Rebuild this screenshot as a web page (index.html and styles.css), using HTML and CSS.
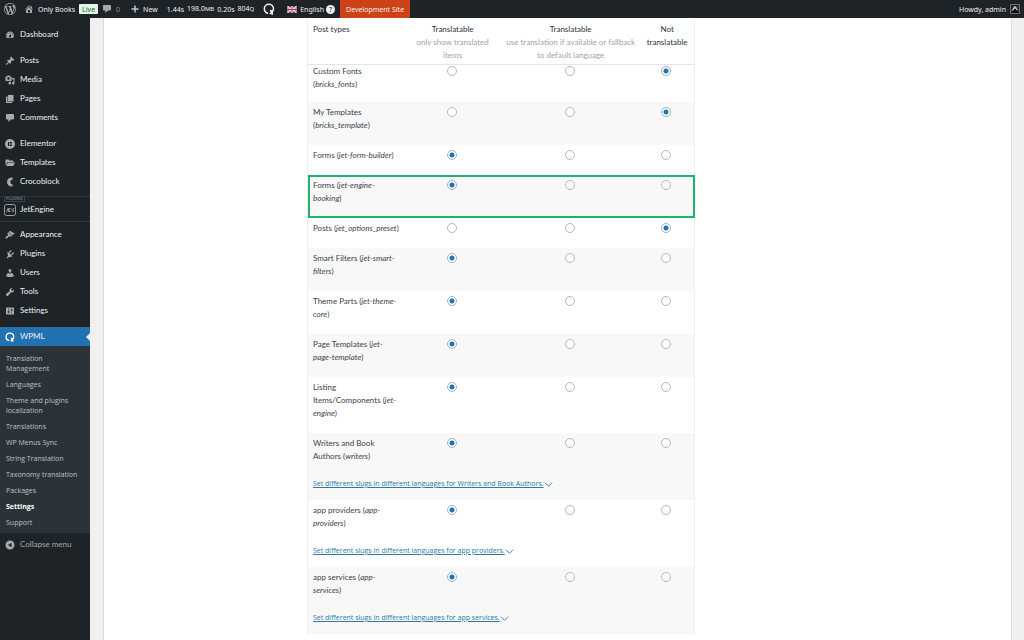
FILE: index.html
```html
<!DOCTYPE html>
<html lang="en">
<head>
<meta charset="utf-8">
<meta name="viewport" content="width=device-width, initial-scale=1">
<title>Settings ‹ Only Books</title>
<link rel="stylesheet" href="styles.css">
</head>
<body>
<svg class="sprite" aria-hidden="true">
<symbol id="wp" viewBox="0 0 20 20"><path d="M20 10c0-5.51-4.49-10-10-10C4.48 0 0 4.49 0 10c0 5.52 4.48 10 10 10 5.51 0 10-4.48 10-10zM7.78 15.37L4.37 6.22c.55-.02 1.17-.08 1.17-.08.5-.06.44-1.13-.06-1.11 0 0-1.45.11-2.37.11-.18 0-.37 0-.58-.01C4.12 2.69 6.87 1.11 10 1.11c2.33 0 4.45.87 6.05 2.34-.68-.11-1.65.39-1.65 1.58 0 .74.45 1.36.9 2.1.35.61.55 1.36.55 2.46 0 1.49-1.4 5-1.4 5l-3.03-8.37c.54-.02.82-.17.82-.17.5-.05.44-1.25-.06-1.22 0 0-1.44.12-2.38.12-.87 0-2.33-.12-2.33-.12-.5-.03-.56 1.2-.06 1.22l.92.08 1.26 3.41zM17.41 10c.24-.64.74-1.87.43-4.25.7 1.29 1.05 2.71 1.05 4.25 0 3.29-1.73 6.24-4.4 7.78.97-2.59 1.94-5.2 2.92-7.78zM6.1 18.09C3.12 16.65 1.11 13.53 1.11 10c0-1.3.23-2.48.72-3.59C3.25 10.3 4.67 14.2 6.1 18.09zm4.03-6.63l2.58 6.98c-.86.29-1.76.45-2.71.45-.79 0-1.57-.11-2.29-.33.81-2.38 1.62-4.74 2.42-7.1z"/></symbol>
<symbol id="home" viewBox="0 0 20 20"><path fill-rule="evenodd" d="M16 8.500l1.530 1.530-1.060 1.060L10 4.600l-6.470 6.490-1.060-1.060L10 2.500l4 4v-2h2v4zm-6-2.460l6 5.990V18H4v-5.970zM12 17v-5H8v5h4z"/></symbol>
<symbol id="comment" viewBox="0 0 20 20"><path d="M4 2h12c1.100 0 2 .9 2 2v7c0 1.100-.9 2-2 2h-4l-5 5v-5H4c-1.100 0-2-.9-2-2V4c0-1.100.9-2 2-2z"/></symbol>
<symbol id="plus" viewBox="0 0 20 20"><path d="M17 8.500v3h-5.500V17h-3v-5.500H3v-3h5.500V3h3v5.500z"/></symbol>
<symbol id="wpml" viewBox="0 0 20 20"><path fill="none" stroke="currentColor" stroke-width="2.600" d="M8.500 17.200A7.600 7.600 0 1 1 17.400 10c0 3.200-2.400 4.800-4.800 3.500"/><path d="M11 11l6 1.500-.6 7.300-6.400-2.300 3-1.500z"/></symbol>
<symbol id="dash" viewBox="0 0 20 20"><path fill-rule="evenodd" d="M3.760 16h12.480c1.100-1.370 1.760-3.110 1.760-5 0-4.420-3.580-8-8-8s-8 3.580-8 8c0 1.890.66 3.630 1.760 5zM10 4c.55 0 1 .45 1 1s-.45 1-1 1-1-.45-1-1 .45-1 1-1zM6 6c.55 0 1 .45 1 1s-.45 1-1 1-1-.45-1-1 .45-1 1-1zm8 0c.55 0 1 .45 1 1s-.45 1-1 1-1-.45-1-1 .45-1 1-1zm-5.370 5.550L12 7v6c0 1.100-.9 2-2 2s-2-.9-2-2c0-.57.24-1.080.63-1.450zM4 10c.55 0 1 .45 1 1s-.45 1-1 1-1-.45-1-1 .45-1 1-1zm12 0c.55 0 1 .45 1 1s-.45 1-1 1-1-.45-1-1 .45-1 1-1z"/></symbol>
<symbol id="pin" viewBox="0 0 20 20"><path d="M10.440 3.020l1.820-1.820 6.360 6.350-1.830 1.820c-1.050-.68-2.480-.57-3.410.36l-.75.75c-.92.93-1.040 2.350-.35 3.410l-1.830 1.820-2.410-2.410-2.800 2.790c-.42.42-3.380 2.710-3.800 2.290s1.860-3.390 2.280-3.810l2.790-2.790L4.100 9.360l1.830-1.820c1.050.69 2.480.57 3.400-.36l.75-.75c.93-.92 1.050-2.350.36-3.410z"/></symbol>
<symbol id="media" viewBox="0 0 20 20"><path fill-rule="evenodd" d="M13 11V4c0-.55-.45-1-1-1h-1.670L9 1H5L3.670 3H2c-.55 0-1 .45-1 1v7c0 .55.45 1 1 1h10c.55 0 1-.45 1-1zM7 4.500c1.380 0 2.500 1.120 2.500 2.500S8.380 9.500 7 9.500 4.500 8.380 4.500 7 5.620 4.500 7 4.500zM14 6h5v10.500c0 1.380-1.120 2.500-2.500 2.500S14 17.880 14 16.500s1.120-2.500 2.500-2.500c.17 0 .34.02.5.05V9h-3V6zm-4 8.050V13h2v3.500c0 1.380-1.120 2.500-2.500 2.500S7 17.880 7 16.500 8.120 14 9.500 14c.17 0 .34.02.5.05z"/></symbol>
<symbol id="page" viewBox="0 0 20 20"><path d="M6 15V2h11v13H6zm-1 1h9v2H2V5h3v11z"/></symbol>
<symbol id="elementor" viewBox="0 0 20 20"><path fill-rule="evenodd" d="M10 0a10 10 0 1 0 0 20 10 10 0 0 0 0-20zM6 6h2v8H6zm3 0h5v2H9zm0 3h5v2H9zm0 3h5v2H9z"/></symbol>
<symbol id="folder" viewBox="0 0 20 20"><path d="M1 15.500V4.500C1 3.700 1.700 3 2.500 3H7l2 2h6.500c.8 0 1.500.7 1.500 1.500V8H5z"/><path d="M5.800 9H20l-3.500 7H2.300z"/></symbol>
<symbol id="croco" viewBox="0 0 20 20"><path d="M15 1v4.500A4.500 4.500 0 0 0 15 14.500V19C8 19.300 4 15 4 10s4-9.300 11-9z"/></symbol>
<symbol id="jet" viewBox="0 0 24 24"><rect x="1" y="1" width="22" height="22" rx="4" fill="none" stroke="currentColor" stroke-width="1.800"/><path fill="none" stroke="currentColor" stroke-width="1.800" d="M4 15c2 1 3-1 3-6M13 9H9v6h4M9 12h3M20 9c-5-1-6 6-1 6v-3"/></symbol>
<symbol id="brush" viewBox="0 0 20 20"><path d="M14.480 11.060L7.410 3.990l1.500-1.500c.5-.56 2.300-.47 3.510.32 1.210.8 1.430 1.280 2.910 2.100 1.180.64 2.450 1.260 4.450.85zm-.71.71L6.700 4.700 4.930 6.470c-.39.39-.39 1.020 0 1.410l1.060 1.060c.39.39.39 1.030 0 1.420-.6.6-1.430 1.110-2.210 1.690-.35.26-.7.53-1.010.84C1.430 14.230.4 16.080 1.400 17.070c.99 1 2.840-.03 4.180-1.360.31-.31.58-.66.85-1.020.57-.78 1.080-1.610 1.690-2.210.39-.39 1.020-.39 1.410 0l1.060 1.060c.39.39 1.020.39 1.410 0z"/></symbol>
<symbol id="plug" viewBox="0 0 20 20"><path d="M13.100 4.400L9.900 7.600 8 5.700l3.200-3.200c.4-.3 1.100-.2 1.600.3s.7 1.200.3 1.600zM17.500 8.800l-3.200 3.200-1.900-1.900 3.200-3.200c.4-.3 1.100-.2 1.600.3s.7 1.200.3 1.600zM5.700 5l9.300 9.300c-1.600 1.700-4.300 2.100-6.300 1.100l-2.600 2.500c-.6.6-1.600.6-2.100 0-.6-.6-.6-1.500 0-2.100l2.400-2.500c-1.300-2.100-2.300-6.300-.7-8.300z"/></symbol>
<symbol id="user" viewBox="0 0 20 20"><path d="M10 9.250c-2.270 0-2.730-3.440-2.730-3.440C7 4.020 7.820 2 9.970 2c2.160 0 2.980 2.020 2.710 3.810 0 0-.41 3.440-2.680 3.440zm0 2.570L12.720 10c2.390 0 4.520 2.330 4.520 4.530v2.490s-3.650 1.130-7.240 1.130c-3.650 0-7.240-1.130-7.240-1.130v-2.490c0-2.250 1.940-4.480 4.470-4.480z"/></symbol>
<symbol id="tool" viewBox="0 0 20 20"><path d="M16.680 9.770c-1.340 1.340-3.300 1.670-4.950.99l-5.410 6.520c-.99.99-2.590.99-3.580 0s-.99-2.590 0-3.570l6.520-5.420c-.68-1.650-.35-3.610.99-4.950 1.280-1.280 3.120-1.620 4.720-1.060l-2.890 2.890 2.820 2.820 2.860-2.870c.53 1.580.18 3.390-1.080 4.650z"/></symbol>
<symbol id="sliders" viewBox="0 0 20 20"><path fill-rule="evenodd" d="M18 16V4c0-.55-.45-1-1-1H3c-.55 0-1 .45-1 1v12c0 .55.45 1 1 1h14c.55 0 1-.45 1-1zM8 11h1c.55 0 1 .45 1 1s-.45 1-1 1H8v1.500c0 .28-.22.5-.5.5s-.5-.22-.5-.5V13H6c-.55 0-1-.45-1-1s.45-1 1-1h1V5.500c0-.28.22-.5.5-.5s.5.22.5.5V11zm5-2h-1c-.55 0-1-.45-1-1s.45-1 1-1h1V5.500c0-.28.22-.5.5-.5s.5.22.5.5V7h1c.55 0 1 .45 1 1s-.45 1-1 1h-1v5.500c0 .28-.22.5-.5.5s-.5-.22-.5-.5V9z"/></symbol>
<symbol id="collapse" viewBox="0 0 20 20"><path fill-rule="evenodd" d="M10 1a9 9 0 1 0 0 18 9 9 0 0 0 0-18zm3 4.500v9L6 10z"/></symbol>
<symbol id="chev" viewBox="0 0 10 10"><path fill="none" stroke="currentColor" stroke-width="1" d="M1 3l4 4 4-4"/></symbol>
</svg>

<header class="bar">
  <a href="#" class="bar-wp" aria-label="About WordPress"><svg class="ic ic-lg"><use href="#wp"/></svg></a>
  <a href="#" class="bar-site"><svg class="ic"><use href="#home"/></svg>Only Books</a>
  <a href="#" class="live">Live</a>
  <a href="#" class="bar-comments"><svg class="ic"><use href="#comment"/></svg><span class="zero">0</span></a>
  <a href="#" class="bar-new"><svg class="ic"><use href="#plus"/></svg>New</a>
  <a href="#" class="bar-stats"><span>1.44s</span><span>198.0<small>MB</small></span><span>0.20s</span><span>804<small>Q</small></span></a>
  <a href="#" class="bar-wpml" aria-label="WPML"><svg class="ic ic-lg"><use href="#wpml"/></svg></a>
  <a href="#" class="bar-lang"><svg class="flag" viewBox="0 0 20 14"><path fill="#2b3f86" d="M0 0h20v14H0z"/><path stroke="#fff" stroke-width="3" d="M0 0l20 14M20 0L0 14"/><path stroke="#d8283f" stroke-width="1" d="M0 0l20 14M20 0L0 14"/><path stroke="#fff" stroke-width="4" d="M10 0v14M0 7h20"/><path stroke="#d8283f" stroke-width="2" d="M10 0v14M0 7h20"/></svg>English<span class="help">?</span></a>
  <a href="#" class="dev">Development Site</a>
  <a href="#" class="howdy">Howdy, admin<svg class="avatar" viewBox="0 0 20 20"><path fill="#23252a" stroke="#85878a" stroke-width="1.500" d="M1 1h18v18H1z"/><path fill="#c9c5bd" d="M3 14l5-9 3-1 2 4 4 5-4-1-3-3-2 3z"/><path fill="#050505" d="M6 14l4-5 4 6 3 1v2H4z"/><path fill="#b4653a" d="M13 4l3 3-1 1-2-2z"/></svg></a>
</header>

<div class="shell">
<nav class="side" aria-label="Main menu">
  <ul class="menu">
    <li><a href="#"><svg class="ic"><use href="#dash"/></svg>Dashboard</a></li>
    <li class="gap"><a href="#"><svg class="ic"><use href="#pin"/></svg>Posts</a></li>
    <li><a href="#"><svg class="ic"><use href="#media"/></svg>Media</a></li>
    <li><a href="#"><svg class="ic"><use href="#page"/></svg>Pages</a></li>
    <li><a href="#"><svg class="ic"><use href="#comment"/></svg>Comments</a></li>
    <li class="gap"><a href="#"><svg class="ic"><use href="#elementor"/></svg>Elementor</a></li>
    <li><a href="#"><svg class="ic"><use href="#folder"/></svg>Templates</a></li>
    <li><a href="#"><svg class="ic"><use href="#croco"/></svg>Crocoblock</a></li>
    <li class="jet"><span class="tag">PLUGINS</span><a href="#"><svg class="ic ic-lg"><use href="#jet"/></svg>JetEngine</a></li>
    <li class="near"><a href="#"><svg class="ic"><use href="#brush"/></svg>Appearance</a></li>
    <li><a href="#"><svg class="ic"><use href="#plug"/></svg>Plugins</a></li>
    <li><a href="#"><svg class="ic"><use href="#user"/></svg>Users</a></li>
    <li><a href="#"><svg class="ic"><use href="#tool"/></svg>Tools</a></li>
    <li><a href="#"><svg class="ic"><use href="#sliders"/></svg>Settings</a></li>
    <li class="gap current"><a href="#"><svg class="ic"><use href="#wpml"/></svg>WPML</a>
      <ul class="sub">
        <li><a href="#">Translation<br>Management</a></li>
        <li><a href="#">Languages</a></li>
        <li><a href="#">Theme and plugins<br>localization</a></li>
        <li><a href="#">Translations</a></li>
        <li><a href="#">WP Menus Sync</a></li>
        <li><a href="#">String Translation</a></li>
        <li><a href="#">Taxonomy translation</a></li>
        <li><a href="#">Packages</a></li>
        <li><a href="#" class="on">Settings</a></li>
        <li><a href="#">Support</a></li>
      </ul>
    </li>
  </ul>
  <button type="button" class="collapse"><svg class="ic"><use href="#collapse"/></svg>Collapse menu</button>
</nav>

<main class="panel">
<table class="types">
  <colgroup><col class="c-name"><col class="c-show"><col class="c-fall"><col class="c-not"></colgroup>
  <thead>
    <tr><th scope="col">Post types</th><th scope="col">Translatable<br><span>only show translated<br>items</span></th><th scope="col">Translatable<br><span>use translation if available or fallback<br>to default language</span></th><th scope="col">Not<br>translatable</th></tr>
  </thead>
  <tbody>
    <tr class="first"><td>Custom Fonts<br>(<i>bricks_fonts</i>)</td><td><input type="radio" name="t1" aria-label="Custom Fonts: translatable"></td><td><input type="radio" name="t1" aria-label="Custom Fonts: fallback"></td><td><input type="radio" name="t1" aria-label="Custom Fonts: not translatable" checked></td></tr>
    <tr class="alt"><td>My Templates<br>(<i>bricks_template</i>)</td><td><input type="radio" name="t2" aria-label="My Templates: translatable"></td><td><input type="radio" name="t2" aria-label="My Templates: fallback"></td><td><input type="radio" name="t2" aria-label="My Templates: not translatable" checked></td></tr>
    <tr><td>Forms (<i>jet-form-builder</i>)</td><td><input type="radio" name="t3" aria-label="Form builder: translatable" checked></td><td><input type="radio" name="t3" aria-label="Form builder: fallback"></td><td><input type="radio" name="t3" aria-label="Form builder: not translatable"></td></tr>
    <tr class="alt marked"><td>Forms (<i>jet-engine-<br>booking</i>)</td><td><input type="radio" name="t4" aria-label="Booking forms: translatable" checked></td><td><input type="radio" name="t4" aria-label="Booking forms: fallback"></td><td><input type="radio" name="t4" aria-label="Booking forms: not translatable"></td></tr>
    <tr><td>Posts (<i>jet_options_preset</i>)</td><td><input type="radio" name="t5" aria-label="Posts: translatable"></td><td><input type="radio" name="t5" aria-label="Posts: fallback"></td><td><input type="radio" name="t5" aria-label="Posts: not translatable" checked></td></tr>
    <tr class="alt"><td>Smart Filters (<i>jet-smart-<br>filters</i>)</td><td><input type="radio" name="t6" aria-label="Smart Filters: translatable" checked></td><td><input type="radio" name="t6" aria-label="Smart Filters: fallback"></td><td><input type="radio" name="t6" aria-label="Smart Filters: not translatable"></td></tr>
    <tr><td>Theme Parts (<i>jet-theme-<br>core</i>)</td><td><input type="radio" name="t7" aria-label="Theme Parts: translatable" checked></td><td><input type="radio" name="t7" aria-label="Theme Parts: fallback"></td><td><input type="radio" name="t7" aria-label="Theme Parts: not translatable"></td></tr>
    <tr class="alt"><td>Page Templates (<i>jet-<br>page-template</i>)</td><td><input type="radio" name="t8" aria-label="Page Templates: translatable" checked></td><td><input type="radio" name="t8" aria-label="Page Templates: fallback"></td><td><input type="radio" name="t8" aria-label="Page Templates: not translatable"></td></tr>
    <tr><td>Listing<br>Items/Components (<i>jet-<br>engine</i>)</td><td><input type="radio" name="t9" aria-label="Listing Items: translatable" checked></td><td><input type="radio" name="t9" aria-label="Listing Items: fallback"></td><td><input type="radio" name="t9" aria-label="Listing Items: not translatable"></td></tr>
    <tr class="alt"><td>Writers and Book<br>Authors (<i>writers</i>)</td><td><input type="radio" name="t10" aria-label="Writers: translatable" checked></td><td><input type="radio" name="t10" aria-label="Writers: fallback"></td><td><input type="radio" name="t10" aria-label="Writers: not translatable"></td></tr>
    <tr class="alt slug"><td colspan="4"><a href="#">Set different slugs in different languages for Writers and Book Authors.</a><svg class="chev"><use href="#chev"/></svg></td></tr>
    <tr><td>app providers (<i>app-<br>providers</i>)</td><td><input type="radio" name="t11" aria-label="app providers: translatable" checked></td><td><input type="radio" name="t11" aria-label="app providers: fallback"></td><td><input type="radio" name="t11" aria-label="app providers: not translatable"></td></tr>
    <tr class="slug"><td colspan="4"><a href="#">Set different slugs in different languages for app providers.</a><svg class="chev"><use href="#chev"/></svg></td></tr>
    <tr class="alt"><td>app services (<i>app-<br>services</i>)</td><td><input type="radio" name="t12" aria-label="app services: translatable" checked></td><td><input type="radio" name="t12" aria-label="app services: fallback"></td><td><input type="radio" name="t12" aria-label="app services: not translatable"></td></tr>
    <tr class="alt slug"><td colspan="4"><a href="#">Set different slugs in different languages for app services.</a><svg class="chev"><use href="#chev"/></svg></td></tr>
  </tbody>
</table>
</main>
</div>
</body>
</html>
```
FILE: styles.css
```css
* { box-sizing: border-box; }
body {
  margin: 0;
  min-height: 100vh;
  display: flex;
  flex-direction: column;
  background: #f0f0f1;
  color: #3c434a;
  font: 8px/13px Lato, "Open Sans", sans-serif;
}
a { color: inherit; text-decoration: none; }
ul { margin: 0; padding: 0; list-style: none; }
.sprite { display: none; }
.ic { width: 10px; height: 10px; flex: none; fill: currentColor; color: #a7aaad; }
.ic-lg { width: 12px; height: 12px; }

.bar {
  display: flex;
  align-items: center;
  height: 18px;
  padding: 0 4px;
  background: #1d2327;
  color: #f0f0f1;
  font-family: "Noto Sans", sans-serif;
  font-size: 7px;
  white-space: nowrap;
}
.bar a { display: flex; align-items: center; flex: none; }
.bar-site { gap: 4px; margin-left: 8px; }
.bar .live {
  height: 10px;
  margin-left: 4px;
  padding: 0 3px;
  border-radius: 1px;
  background: #e2f5e6;
  color: #12682b;
}
.bar-comments { gap: 4px; margin-left: 4px; }
.zero { color: #8c9196; }
.bar-new { gap: 3px; margin-left: 10px; }
.bar-new .ic { color: #c3c4c7; }
.bar-stats { gap: 3px; margin-left: 9px; }
.bar-stats small { font-size: 6px; }
.bar-wpml { margin-left: 9px; }
.bar-wpml .ic { color: #f0f0f1; }
.bar-lang { gap: 3px; margin-left: 12px; }
.flag { width: 10px; height: 7px; }
.help {
  width: 9px;
  height: 9px;
  margin-left: -1px;
  border-radius: 50%;
  background: #f0f0f1;
  color: #1d2327;
  line-height: 9px;
  text-align: center;
}
.bar .dev { align-self: stretch; margin-left: 5px; padding: 0 6px; background: #ce4218; }
.bar .howdy { gap: 4px; margin-left: auto; }
.avatar { width: 10px; height: 10px; }

.shell { display: flex; flex: 1; }
.side {
  flex: none;
  width: 90px;
  padding-top: 7px;
  background: #1d2327;
  color: #f0f0f1;
}
.menu > li > a { display: flex; align-items: center; gap: 5px; height: 19px; padding-left: 5px; }
.menu > li > a .ic-lg { margin: 0 -1px; }
.menu .gap { margin-top: 7px; }
.menu .near { margin-top: 3px; }
.menu .jet {
  position: relative;
  margin-top: 5px;
  padding: 3px 0 2px;
  border: solid #30363c;
  border-width: 1px 0;
}
.tag {
  position: absolute;
  top: -1px;
  left: 4px;
  padding: 0 1px;
  border: 1px solid #3c434a;
  color: #8c9196;
  font-size: 4px;
  line-height: 4px;
}
.current > a { position: relative; background: #2271b1; }
.current > a .ic { color: #fff; }
.current > a::after {
  content: "";
  position: absolute;
  right: 0;
  border: 4px solid transparent;
  border-right-color: #f0f0f1;
  border-left: 0;
}
.sub {
  padding: 5px 0 2px;
  background: #2c3338;
  color: #bcc0c3;
  font-family: "Open Sans", sans-serif;
  font-size: 7px;
}
.sub a { display: block; padding: 3px 6px; line-height: 10px; }
.sub .on { color: #fff; font-weight: 700; }
.collapse {
  display: flex;
  align-items: center;
  gap: 5px;
  height: 23px;
  padding: 0 5px;
  border: 0;
  background: none;
  color: #a7aaad;
  font: inherit;
}

.panel {
  flex: 1;
  margin: 0 12px 0 13px;
  padding-left: 203px;
  border: solid #dcdcde;
  border-width: 0 1px;
  background: #fff;
}
.types {
  width: 388px;
  border-collapse: collapse;
  table-layout: fixed;
  border: solid #f0f0f1;
  border-width: 0 1px;
}
.c-name { width: 25%; }
.c-show { width: 25%; }
.c-fall { width: 36%; }
.c-not { width: 14%; }
.types th {
  padding: 5px 0 2px;
  border-bottom: 1px solid #e5e5e7;
  color: #2c3338;
  font-weight: 400;
  vertical-align: top;
  text-align: center;
  white-space: nowrap;
}
.types th span { color: #a0a3a6; }
.types td { padding: 4px 2px 13px 0; vertical-align: top; text-align: center; white-space: nowrap; }
.types th:first-child, .types td:first-child { padding-left: 5px; text-align: left; }
.types .first td { padding-top: 0; padding-bottom: 11px; }
.alt { background: #f8f8f8; }
.marked { outline: 2px solid #1cb56b; outline-offset: -2px; }
.types .slug td {
  padding: 1px 0 10px 5px;
  color: #2b7ba3;
  font-family: "Open Sans", sans-serif;
  font-size: 7px;
}
.slug a { text-decoration: underline; }
.chev { width: 9px; height: 9px; vertical-align: middle; }
.types input {
  appearance: none;
  display: block;
  width: 10px;
  height: 10px;
  margin: 1px auto 0;
  border: 1px solid #b4b7ba;
  border-radius: 50%;
  background: #fff;
}
.types input:checked { border-color: #93b5d0; background: radial-gradient(circle, #2271b1 2px, #fff 3px); }
```
